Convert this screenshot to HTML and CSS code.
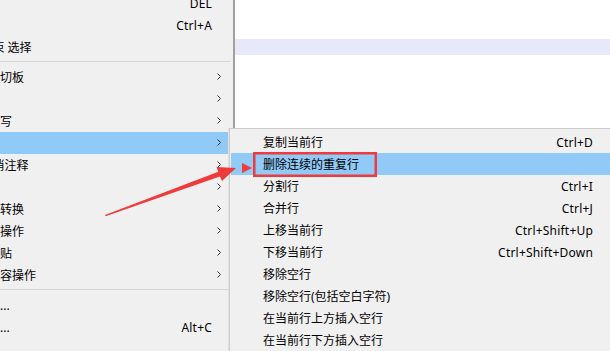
FILE: index.html
```html
<!DOCTYPE html>
<html lang="zh-CN">

<head>
    <meta charset="UTF-8" />
    <meta name="viewport" content="width=device-width, initial-scale=1" />
    <title>编辑菜单 - 行操作</title>
    <link rel="stylesheet" href="styles.css">
</head>

<body>

    <div class="editor">
        <div class="editor-line"></div>
        <div class="editor-line current"></div>
    </div>

    <!-- Hauptmenü "编辑" -->
    <ul class="menu menu-main">
        <li class="item"><span class="label">删除</span><span class="key">DEL</span></li>
        <li class="item"><span class="label">全选</span><span class="key">Ctrl+A</span></li>
        <li class="item"><span class="label">开始/结束 选择</span></li>
        <li class="sep"></li>
        <li class="item sub"><span class="label">复制到剪切板</span></li>
        <li class="item sub"><span class="label">缩进</span></li>
        <li class="item sub"><span class="label">转换大小写</span></li>
        <li class="item sub active"><span class="label">行操作</span></li>
        <li class="item sub"><span class="label">注释/取消注释</span></li>
        <li class="item sub"><span class="label">自动完成</span></li>
        <li class="item sub"><span class="label">文档格式转换</span></li>
        <li class="item sub"><span class="label">空白字符操作</span></li>
        <li class="item sub"><span class="label">选择性粘贴</span></li>
        <li class="item sub"><span class="label">对选中内容操作</span></li>
        <li class="sep"></li>
        <li class="item"><span class="label">列块模式...</span></li>
        <li class="item"><span class="label">列块编辑...</span><span class="key">Alt+C</span></li>
        <li class="item"><span class="label">字符面板</span></li>
    </ul>

    <!-- Untermenü "行操作" -->
    <ul class="menu menu-sub">
        <li class="item"><span class="label">复制当前行</span><span class="key">Ctrl+D</span></li>
        <li class="item active"><span class="label">删除连续的重复行</span></li>
        <li class="item"><span class="label">分割行</span><span class="key">Ctrl+I</span></li>
        <li class="item"><span class="label">合并行</span><span class="key">Ctrl+J</span></li>
        <li class="item"><span class="label">上移当前行</span><span class="key">Ctrl+Shift+Up</span></li>
        <li class="item"><span class="label">下移当前行</span><span class="key">Ctrl+Shift+Down</span></li>
        <li class="item"><span class="label">移除空行</span></li>
        <li class="item"><span class="label">移除空行(包括空白字符)</span></li>
        <li class="item"><span class="label">在当前行上方插入空行</span></li>
        <li class="item"><span class="label">在当前行下方插入空行</span></li>
    </ul>

    <!-- Markierung: Pfeil, Dreieck, Rahmen -->
    <svg class="annotation" width="610" height="351" viewBox="0 0 610 351">
        <polygon points="105,215 218.3,171.7 216.5,167 236,168 222,181 219.9,176.5 105.6,216.2" fill="#ef3b3b" />
        <polygon points="242,163 252,168 242,173" fill="#ef3b3b" />
        <rect x="254.25" y="153.25" width="121.5" height="22.5" fill="none" stroke="#ef3b3b" stroke-width="2.5" />
    </svg>

</body>

</html>
```

FILE: styles.css
```css
html,
body {
    margin: 0;
    height: 100%;
}

body {
    position: relative;
    width: 610px;
    height: 351px;
    overflow: hidden;
    background: #f0f0f0;
    font-family: "Noto Sans", "Noto Sans CJK SC", sans-serif;
    font-size: 12px;
    color: #000;
}

/* Editorfläche rechts oben */
.editor {
    margin-left: 235px;
    height: 128px;
    background: #fff;
    padding-top: 39px;
    box-sizing: border-box;
}

.editor-line.current {
    height: 16px;
    background: #e8e8fa;
}

/* Menüs liegen über dem Editor */
.menu {
    position: absolute;
    margin: 0;
    padding: 2px 0;
    list-style: none;
    background: #f0f0f0;
    box-sizing: border-box;
}

.menu-main {
    left: -82px;
    top: -11px;
    width: 317px;
    border: 1px solid #c8c8c8;
    border-right: 2px solid #a0a0a0;
}

.menu-sub {
    left: 229px;
    top: 128px;
    width: 400px;
    border: 1px solid #cccccc;
    box-shadow: -1px 0 0 #e0e0e0;
}

.item {
    position: relative;
    display: flex;
    align-items: center;
    height: 22px;
    margin: 0 1px;
    padding: 0 20px 0 32px;
    white-space: nowrap;
}

.menu-sub .item {
    padding-right: 34px;
}

.item .label {
    flex: 1;
}

.item .key {
    letter-spacing: 0.2px;
}

.item.active {
    background: #91c9f7;
}

.sub::after {
    content: "";
    position: absolute;
    right: 11px;
    top: 7px;
    width: 4px;
    height: 7px;
    background: url("data:image/svg+xml,%3Csvg xmlns='http://www.w3.org/2000/svg' width='4' height='7'%3E%3Cpolyline points='0.5,0.5 3.5,3.5 0.5,6.5' fill='none' stroke='%23333' stroke-width='1'/%3E%3C/svg%3E") no-repeat;
}

.sep {
    height: 8px;
    position: relative;
}

.sep::before {
    content: "";
    position: absolute;
    left: 30px;
    right: 2px;
    top: 3px;
    border-top: 1px solid #d7d7d7;
}

.annotation {
    position: absolute;
    left: 0;
    top: 0;
    pointer-events: none;
}
```
